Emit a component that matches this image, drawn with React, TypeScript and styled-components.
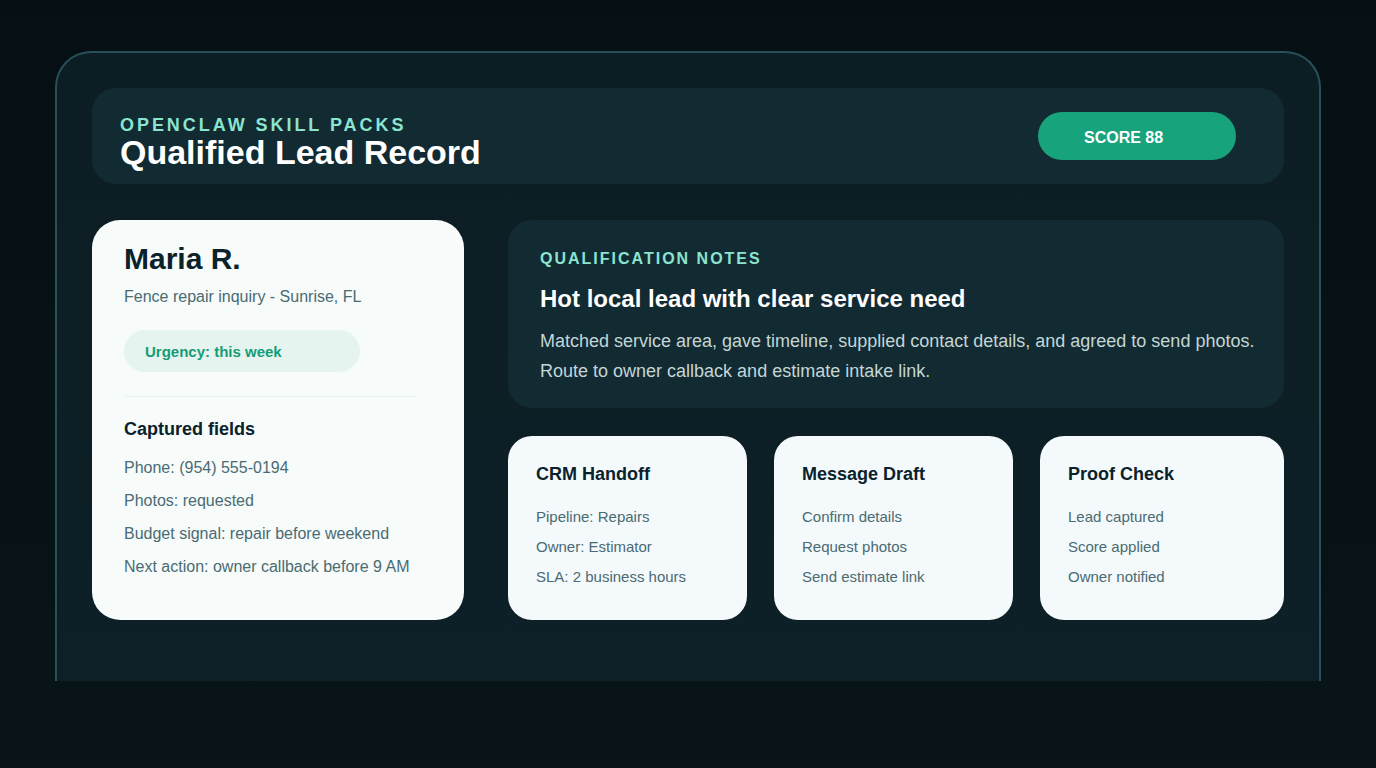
import React from "react";
import styled, { createGlobalStyle } from "styled-components";

const GlobalStyle = createGlobalStyle`
  html, body {
    margin: 0;
    padding: 0;
    height: 100%;
    background: #071217;
    font-family: "Liberation Sans", Arial, sans-serif;
  }
`;

const Page = styled.div`
  width: 1376px;
  height: 768px;
  padding: 51px 55px 0;
  box-sizing: border-box;
  overflow: hidden;
  background: linear-gradient(180deg, #061014 0%, #081418 100%);
`;

const Frame = styled.main`
  box-sizing: border-box;
  width: 1266px;
  height: 630px;
  padding: 35px 35px 0;
  border: 2px solid #275058;
  border-bottom: 0;
  border-radius: 36px 36px 0 0;
  background: linear-gradient(180deg, #0c1d23 0%, #0e2027 100%);
  display: flex;
  flex-direction: column;
  gap: 36px;
`;

const Header = styled.header`
  height: 96px;
  padding: 0 48px 0 28px;
  border-radius: 24px;
  background: #122a32;
  display: flex;
  align-items: center;
  justify-content: space-between;
`;

const HeaderText = styled.div`
  display: flex;
  flex-direction: column;
  gap: 3px;
  padding-top: 11px;
`;

const Eyebrow = styled.div`
  font-size: 18px;
  line-height: 18px;
  font-weight: 700;
  letter-spacing: 2.95px;
  color: #8ae4d0;
`;

const Title = styled.h1`
  margin: 0;
  font-size: 34px;
  line-height: 30px;
  font-weight: 700;
  color: #ffffff;
`;

const ScorePill = styled.div`
  box-sizing: border-box;
  width: 198px;
  height: 48px;
  padding-left: 46px;
  border-radius: 24px;
  background: #17a37c;
  color: #ffffff;
  font-size: 16px;
  font-weight: 700;
  line-height: 51px;
`;

const Body = styled.div`
  display: flex;
  gap: 44px;
  height: 400px;
`;

const LeadCard = styled.section`
  box-sizing: border-box;
  width: 372px;
  padding: 20px 48px 0 32px;
  border-radius: 28px;
  background: #f7fbfa;
`;

const LeadName = styled.h2`
  margin: 0;
  font-size: 30px;
  line-height: 38px;
  font-weight: 700;
  color: #0a222a;
`;

const LeadMeta = styled.p`
  margin: 9px 0 0;
  font-size: 16px;
  line-height: 20px;
  color: #4a6b72;
`;

const UrgencyPill = styled.div`
  box-sizing: border-box;
  width: 236px;
  height: 42px;
  margin-top: 23px;
  padding-left: 21px;
  border-radius: 21px;
  background: #e6f4f0;
  color: #159c77;
  font-size: 15px;
  font-weight: 700;
  line-height: 44px;
`;

const Divider = styled.hr`
  height: 1px;
  margin: 24px 0 0;
  border: 0;
  background: #e6f4f0;
`;

const FieldsTitle = styled.h3`
  margin: 22px 0 0;
  font-size: 18px;
  line-height: 20px;
  font-weight: 700;
  color: #0a222a;
`;

const FieldList = styled.div`
  margin-top: 19px;
  display: flex;
  flex-direction: column;
  gap: 13px;
`;

const FieldRow = styled.div`
  font-size: 16px;
  line-height: 20px;
  color: #4a6b72;
`;

const RightColumn = styled.div`
  flex: 1;
  display: flex;
  flex-direction: column;
  gap: 28px;
`;

const NotesCard = styled.section`
  box-sizing: border-box;
  height: 188px;
  padding: 29px 28px 0 32px;
  border-radius: 24px;
  background: #122a32;
`;

const NotesLabel = styled.div`
  font-size: 16px;
  line-height: 20px;
  font-weight: 700;
  letter-spacing: 2px;
  color: #8ae4d0;
`;

const NotesTitle = styled.h2`
  margin: 16px 0 0;
  font-size: 24px;
  line-height: 28px;
  font-weight: 700;
  color: #ffffff;
`;

const NotesBody = styled.p`
  margin: 13px 0 0;
  font-size: 18px;
  line-height: 30px;
  color: #c3d6d6;
`;

const CardRow = styled.div`
  flex: 1;
  display: flex;
  gap: 27px;
`;

const MiniCard = styled.section<{ $wide?: boolean }>`
  box-sizing: border-box;
  width: ${(props) => (props.$wide ? "244px" : "239px")};
  padding: 26px 28px 0;
  border-radius: 24px;
  background: #f4f9fc;
`;

const MiniTitle = styled.h3`
  margin: 0;
  font-size: 18px;
  line-height: 24px;
  font-weight: 700;
  color: #0a222a;
`;

const MiniList = styled.div`
  margin-top: 22px;
  display: flex;
  flex-direction: column;
  gap: 12px;
`;

const MiniRow = styled.div`
  font-size: 15px;
  line-height: 18px;
  color: #4a6b72;
`;

const fields = [
  "Phone: (954) 555-0194",
  "Photos: requested",
  "Budget signal: repair before weekend",
  "Next action: owner callback before 9 AM",
];

const miniCards = [
  {
    title: "CRM Handoff",
    rows: ["Pipeline: Repairs", "Owner: Estimator", "SLA: 2 business hours"],
  },
  {
    title: "Message Draft",
    rows: ["Confirm details", "Request photos", "Send estimate link"],
  },
  {
    title: "Proof Check",
    rows: ["Lead captured", "Score applied", "Owner notified"],
  },
];

const App: React.FC = () => {
  return (
    <Page>
      <GlobalStyle />
      <Frame>
        <Header>
          <HeaderText>
            <Eyebrow>OPENCLAW SKILL PACKS</Eyebrow>
            <Title>Qualified Lead Record</Title>
          </HeaderText>
          <ScorePill>SCORE 88</ScorePill>
        </Header>
        <Body>
          <LeadCard>
            <LeadName>Maria R.</LeadName>
            <LeadMeta>Fence repair inquiry - Sunrise, FL</LeadMeta>
            <UrgencyPill>Urgency: this week</UrgencyPill>
            <Divider />
            <FieldsTitle>Captured fields</FieldsTitle>
            <FieldList>
              {fields.map((field) => (
                <FieldRow key={field}>{field}</FieldRow>
              ))}
            </FieldList>
          </LeadCard>
          <RightColumn>
            <NotesCard>
              <NotesLabel>QUALIFICATION NOTES</NotesLabel>
              <NotesTitle>Hot local lead with clear service need</NotesTitle>
              <NotesBody>
                Matched service area, gave timeline, supplied contact details, and agreed to send photos.
                <br />
                Route to owner callback and estimate intake link.
              </NotesBody>
            </NotesCard>
            <CardRow>
              {miniCards.map((card, i) => (
                <MiniCard key={card.title} $wide={i === 2}>
                  <MiniTitle>{card.title}</MiniTitle>
                  <MiniList>
                    {card.rows.map((row) => (
                      <MiniRow key={row}>{row}</MiniRow>
                    ))}
                  </MiniList>
                </MiniCard>
              ))}
            </CardRow>
          </RightColumn>
        </Body>
      </Frame>
    </Page>
  );
};

export default App;
